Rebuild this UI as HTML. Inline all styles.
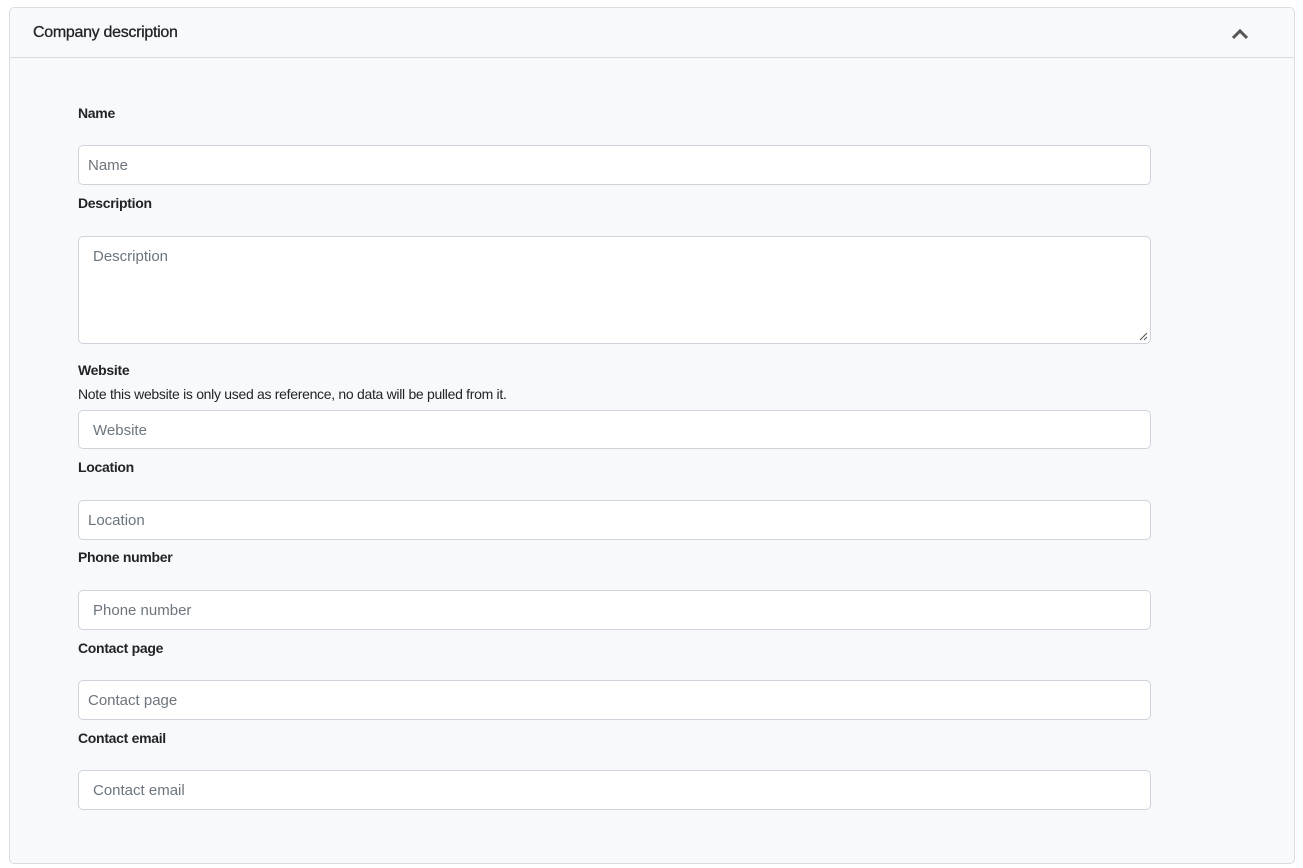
<!DOCTYPE html>
<html><head><style>
*{box-sizing:border-box;margin:0;padding:0}
body{width:1303px;height:868px;background:#fff;font-family:"Liberation Sans",sans-serif;position:relative;overflow:hidden}
.panel{position:absolute;left:9px;top:7px;width:1286px;height:857px;border:1px solid #dcdde0;border-radius:5px;background:#f8f9fa}
.hdr{position:absolute;left:0;top:0;right:0;height:50px;border-bottom:1px solid #dcdde0}
.hdr span{position:absolute;left:23px;top:16px;font-size:16px;color:#212529;letter-spacing:-0.3px;-webkit-text-stroke:0.3px #212529}
.lbl{position:absolute;left:78px;font-size:14px;font-weight:bold;color:#212529;letter-spacing:-0.3px}
.note{position:absolute;left:78px;font-size:14px;color:#212529;letter-spacing:-0.3px}
.in{position:absolute;left:78px;width:1073px;height:40px;background:#fff;border:1px solid #ced4da;border-radius:5px;font-size:15px;color:#6c757d}
.in span{position:absolute;top:11px}
</style></head><body>
<div class="panel"><div class="hdr"><span>Company description</span>
<svg style="position:absolute;left:1221px;top:20px" width="18" height="12" viewBox="0 0 18 12"><path d="M2 10 L9 3 L16 10" fill="none" stroke="#555" stroke-width="3"/></svg></div></div>
<div class="lbl" style="top:105px">Name</div>
<div class="in" style="top:145px"><span style="left:9px">Name</span></div>
<div class="lbl" style="top:195px">Description</div>
<div class="in" style="top:236px;height:108px"><span style="left:14px">Description</span>
<svg style="position:absolute;right:2px;bottom:2px" width="9" height="9"><path d="M1 8 L8 1 M5 8 L8 5" stroke="#555" stroke-width="1"/></svg></div>
<div class="lbl" style="top:362px">Website</div>
<div class="note" style="top:386px">Note this website is only used as reference, no data will be pulled from it.</div>
<div class="in" style="top:410px;height:39px"><span style="left:14px">Website</span></div>
<div class="lbl" style="top:459px">Location</div>
<div class="in" style="top:500px"><span style="left:9px">Location</span></div>
<div class="lbl" style="top:549px">Phone number</div>
<div class="in" style="top:590px"><span style="left:14px">Phone number</span></div>
<div class="lbl" style="top:640px">Contact page</div>
<div class="in" style="top:680px"><span style="left:9px">Contact page</span></div>
<div class="lbl" style="top:730px">Contact email</div>
<div class="in" style="top:770px"><span style="left:14px">Contact email</span></div>
</body></html>
